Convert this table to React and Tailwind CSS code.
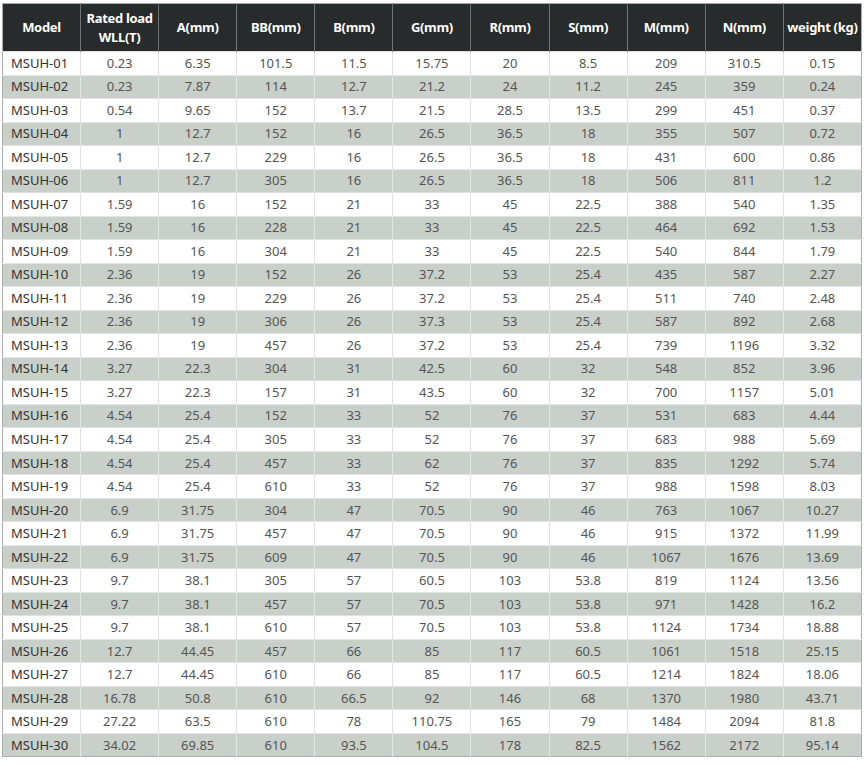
const headers = [
  'Model',
  'Rated load WLL(T)',
  'A(mm)',
  'BB(mm)',
  'B(mm)',
  'G(mm)',
  'R(mm)',
  'S(mm)',
  'M(mm)',
  'N(mm)',
  'weight (kg)',
];

const rows = [
  ['MSUH-01', '0.23', '6.35', '101.5', '11.5', '15.75', '20', '8.5', '209', '310.5', '0.15'],
  ['MSUH-02', '0.23', '7.87', '114', '12.7', '21.2', '24', '11.2', '245', '359', '0.24'],
  ['MSUH-03', '0.54', '9.65', '152', '13.7', '21.5', '28.5', '13.5', '299', '451', '0.37'],
  ['MSUH-04', '1', '12.7', '152', '16', '26.5', '36.5', '18', '355', '507', '0.72'],
  ['MSUH-05', '1', '12.7', '229', '16', '26.5', '36.5', '18', '431', '600', '0.86'],
  ['MSUH-06', '1', '12.7', '305', '16', '26.5', '36.5', '18', '506', '811', '1.2'],
  ['MSUH-07', '1.59', '16', '152', '21', '33', '45', '22.5', '388', '540', '1.35'],
  ['MSUH-08', '1.59', '16', '228', '21', '33', '45', '22.5', '464', '692', '1.53'],
  ['MSUH-09', '1.59', '16', '304', '21', '33', '45', '22.5', '540', '844', '1.79'],
  ['MSUH-10', '2.36', '19', '152', '26', '37.2', '53', '25.4', '435', '587', '2.27'],
  ['MSUH-11', '2.36', '19', '229', '26', '37.2', '53', '25.4', '511', '740', '2.48'],
  ['MSUH-12', '2.36', '19', '306', '26', '37.3', '53', '25.4', '587', '892', '2.68'],
  ['MSUH-13', '2.36', '19', '457', '26', '37.2', '53', '25.4', '739', '1196', '3.32'],
  ['MSUH-14', '3.27', '22.3', '304', '31', '42.5', '60', '32', '548', '852', '3.96'],
  ['MSUH-15', '3.27', '22.3', '157', '31', '43.5', '60', '32', '700', '1157', '5.01'],
  ['MSUH-16', '4.54', '25.4', '152', '33', '52', '76', '37', '531', '683', '4.44'],
  ['MSUH-17', '4.54', '25.4', '305', '33', '52', '76', '37', '683', '988', '5.69'],
  ['MSUH-18', '4.54', '25.4', '457', '33', '62', '76', '37', '835', '1292', '5.74'],
  ['MSUH-19', '4.54', '25.4', '610', '33', '52', '76', '37', '988', '1598', '8.03'],
  ['MSUH-20', '6.9', '31.75', '304', '47', '70.5', '90', '46', '763', '1067', '10.27'],
  ['MSUH-21', '6.9', '31.75', '457', '47', '70.5', '90', '46', '915', '1372', '11.99'],
  ['MSUH-22', '6.9', '31.75', '609', '47', '70.5', '90', '46', '1067', '1676', '13.69'],
  ['MSUH-23', '9.7', '38.1', '305', '57', '60.5', '103', '53.8', '819', '1124', '13.56'],
  ['MSUH-24', '9.7', '38.1', '457', '57', '70.5', '103', '53.8', '971', '1428', '16.2'],
  ['MSUH-25', '9.7', '38.1', '610', '57', '70.5', '103', '53.8', '1124', '1734', '18.88'],
  ['MSUH-26', '12.7', '44.45', '457', '66', '85', '117', '60.5', '1061', '1518', '25.15'],
  ['MSUH-27', '12.7', '44.45', '610', '66', '85', '117', '60.5', '1214', '1824', '18.06'],
  ['MSUH-28', '16.78', '50.8', '610', '66.5', '92', '146', '68', '1370', '1980', '43.71'],
  ['MSUH-29', '27.22', '63.5', '610', '78', '110.75', '165', '79', '1484', '2094', '81.8'],
  ['MSUH-30', '34.02', '69.85', '610', '93.5', '104.5', '178', '82.5', '1562', '2172', '95.14'],
];

export default function App() {
  return (
    <div className="bg-white w-[868px] h-[766px] pl-[2px] pt-[3px] font-['Noto_Sans',sans-serif]">
      <table className="w-[860px] table-fixed border-collapse border border-[#a9aca9] text-[13px]">
        <thead>
          <tr className="h-[48px] bg-[#272b2c] text-white">
            {headers.map((h, i) => (
              <th
                key={h}
                className="font-bold leading-[19px] px-0 whitespace-nowrap tracking-[-0.3px] text-center border-r border-[#6f7373] last:border-r-0"
              >
                {i === 1 ? (
                  <>
                    Rated load
                    <br />
                    WLL(T)
                  </>
                ) : (
                  h
                )}
              </th>
            ))}
          </tr>
        </thead>
        <tbody>
          {rows.map((r, ri) => (
            <tr
              key={r[0]}
              className={`h-[23.53px] ${ri % 2 === 1 ? 'bg-[#c9d0c9]' : 'bg-white'}`}
            >
              {r.map((c, ci) => (
                <td
                  key={ci}
                  className={`leading-none p-0 border-t border-r last:border-r-0 ${
                    ri % 2 === 1 ? 'border-[#e3e7e3]' : 'border-[#e0e2e0]'
                  } ${ci === 0 ? 'text-left pl-[8px] text-[#333]' : 'text-center text-[#555]'}`}
                >
                  {c}
                </td>
              ))}
            </tr>
          ))}
        </tbody>
      </table>
    </div>
  );
}
